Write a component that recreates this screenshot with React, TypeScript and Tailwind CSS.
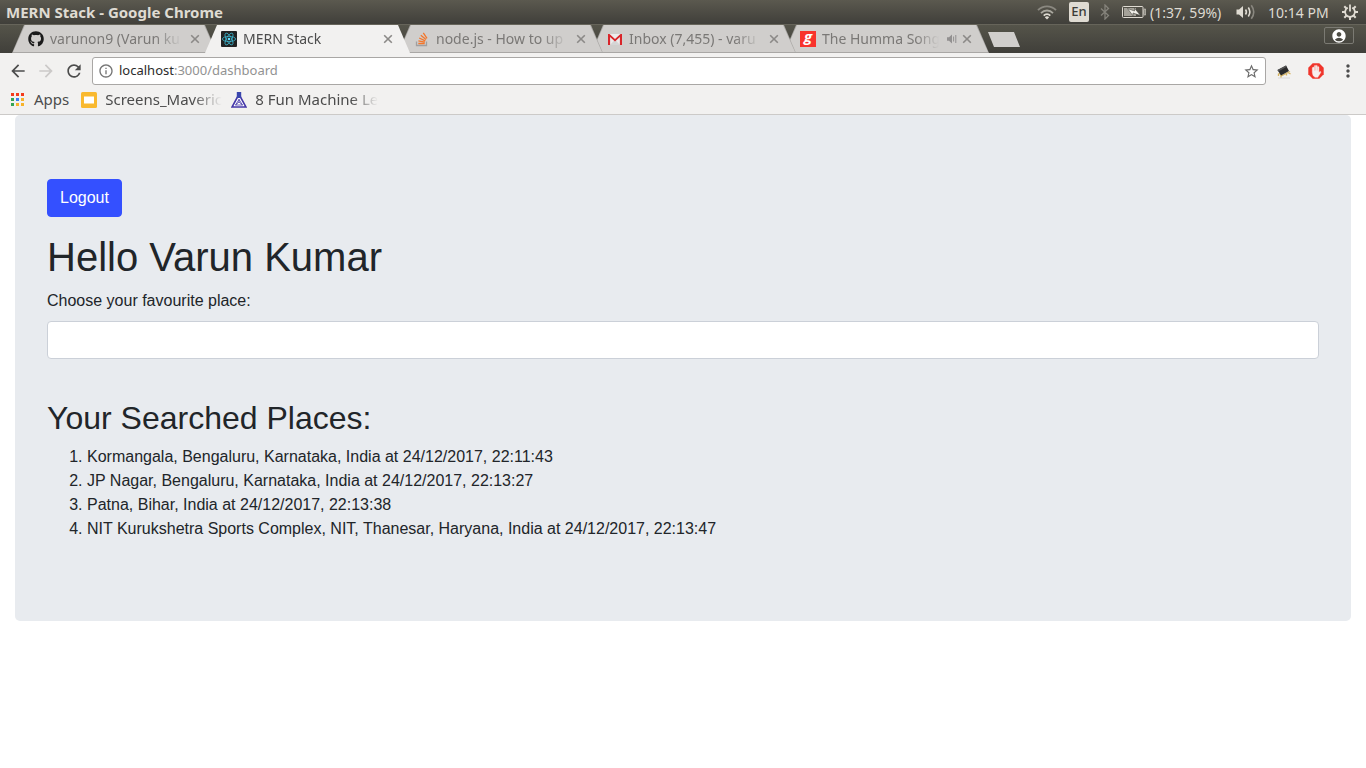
import type { ReactNode } from "react";
import {
  MdAccountCircle,
  MdArrowBack,
  MdArrowForward,
  MdInfoOutline,
  MdMoreVert,
  MdRefresh,
  MdStarBorder,
} from "react-icons/md";
import { FaGithub } from "react-icons/fa";

const places = [
  "Kormangala, Bengaluru, Karnataka, India at 24/12/2017, 22:11:43",
  "JP Nagar, Bengaluru, Karnataka, India at 24/12/2017, 22:13:27",
  "Patna, Bihar, India at 24/12/2017, 22:13:38",
  "NIT Kurukshetra Sports Complex, NIT, Thanesar, Haryana, India at 24/12/2017, 22:13:47",
];

function WifiIcon() {
  return (
    <svg width="20" height="16" viewBox="0 0 20 16" fill="none" strokeWidth="1.8">
      <path d="M1 6.2C6 1 14 1 19 6.2" stroke="#8a8880" />
      <path d="M4 9.2C7.400 5.600 12.600 5.600 16 9.200" stroke="#aaa89f" />
      <path d="M6.700 11.700C8.600 9.700 11.400 9.700 13.300 11.700" stroke="#dfdbd2" />
      <path d="M10 15.500L7.800 13.200Q10 11.500 12.200 13.200Z" fill="#dfdbd2" />
    </svg>
  );
}

function BluetoothIcon() {
  return (
    <svg width="10" height="16" viewBox="0 0 10 16" fill="none" stroke="#85837b" strokeWidth="1.300">
      <path d="M1 4.500L8.500 11.500L5 15V1L8.500 4.500L1 11.500" />
    </svg>
  );
}

function BatteryIcon() {
  return (
    <svg width="24" height="12" viewBox="0 0 24 12">
      <rect x="0.500" y="0.500" width="20.500" height="11" rx="1" fill="none" stroke="#dfdbd2" />
      <rect x="2" y="2" width="12" height="8" fill="#a5a299" />
      <rect x="22" y="3" width="1.800" height="6" rx="0.800" fill="none" stroke="#dfdbd2" strokeWidth="0.900" />
      <path d="M5.500 2.500L12.500 5V2.200L18.500 9.500L11 7V9.800Z" fill="#f2f0ea" stroke="#4a4943" strokeWidth="0.600" />
    </svg>
  );
}

function VolumeIcon() {
  return (
    <svg width="20" height="16" viewBox="0 0 20 16" fill="none" strokeWidth="1.600">
      <path d="M0.500 5.500H3L7 2V14L3 10.500H0.500Z" fill="#dfdbd2" />
      <path d="M9.500 5.500Q11.300 8 9.500 10.500" stroke="#dfdbd2" />
      <path d="M12.300 3.500Q15.400 8 12.300 12.500" stroke="#dfdbd2" />
      <path d="M15.300 1.200Q20.200 8 15.300 14.800" stroke="#8a8880" />
    </svg>
  );
}

function PowerGearIcon() {
  return (
    <svg width="16" height="16" viewBox="0 0 16 16" fill="none" stroke="#dfdbd2">
      <path d="M5.800 3.700A4.900 4.900 0 1 0 10.200 3.700" strokeWidth="1.800" />
      <path d="M8 0.500V7.500" strokeWidth="1.800" />
      <path
        d="M8 13V16M0 8H3M13 8H16M2.300 2.300L4.500 4.500M13.700 2.300L11.500 4.500M2.300 13.700L4.500 11.500M13.700 13.700L11.500 11.500"
        strokeWidth="2"
      />
    </svg>
  );
}

function ReactIcon() {
  return (
    <svg width="16" height="16" viewBox="0 0 16 16" fill="none" stroke="#3cb4cc" strokeWidth="0.800">
      <rect width="16" height="16" rx="1" fill="#222" stroke="none" />
      <ellipse cx="8" cy="8" rx="6.600" ry="2.600" />
      <ellipse cx="8" cy="8" rx="6.600" ry="2.600" transform="rotate(60 8 8)" />
      <ellipse cx="8" cy="8" rx="6.600" ry="2.600" transform="rotate(120 8 8)" />
      <circle cx="8" cy="8" r="1.300" fill="#61dafb" stroke="none" />
    </svg>
  );
}

function StackOverflowIcon() {
  return (
    <svg width="16" height="16" viewBox="0 0 16 16" fill="none" stroke="#f4762a" strokeWidth="1.300">
      <path d="M2.500 10.500V14.500H12.500V10.500" stroke="#a09fa0" />
      <path d="M4.300 12.500H10.700M4.400 9.900L10.800 11.200M5.200 7L11.300 9.900M6.800 4.200L12 8.500M9.300 1.800L13 7.300" />
    </svg>
  );
}

function GmailIcon() {
  return (
    <svg width="16" height="16" viewBox="0 0 16 16">
      <rect x="1" y="3" width="14" height="11" fill="#ececec" />
      <path d="M3 14L8 8.500L13 14Z" fill="#d5d5d5" />
      <path d="M1 14V3H2.500L8 8L13.500 3H15V14H12.900V6L8 10.500L3.100 6V14Z" fill="#d9252a" />
    </svg>
  );
}

function GaanaIcon() {
  return (
    <span className="flex size-4 items-start justify-center bg-[#f8332c] font-['Open_Sans',sans-serif] text-[15px] leading-[11px] font-bold text-white italic">
      g
    </span>
  );
}

function SpeakerIcon() {
  return (
    <svg width="10" height="10" viewBox="0 0 10 10" fill="none" stroke="#929090">
      <path d="M0 3.300H2L5 0.500V9.500L2 6.700H0Z" fill="#929090" stroke="none" />
      <path d="M6.600 2.500V7.500M8.800 1V9" />
    </svg>
  );
}

function CloseIcon() {
  return (
    <svg width="10" height="10" viewBox="0 0 10 10" stroke="#8b8987" strokeWidth="1.600">
      <path d="M1.200 1.200L8.800 8.800M8.800 1.200L1.200 8.800" />
    </svg>
  );
}

function AppsIcon() {
  const colors = ["#f43b1c", "#f43b1c", "#f43b1c", "#35a454", "#3c7df0", "#f7b32b", "#35a454", "#f7b32b", "#f7b32b"];
  return (
    <svg width="13" height="13" viewBox="0 0 13 13">
      {colors.map((color, i) => (
        <rect key={i} x={(i % 3) * 5} y={Math.floor(i / 3) * 5} width="3" height="3" fill={color} />
      ))}
    </svg>
  );
}

function SlidesIcon() {
  return (
    <svg width="16" height="16" viewBox="0 0 16 16">
      <rect width="16" height="16" rx="1.500" fill="#f9b92f" />
      <rect x="3" y="4.500" width="10" height="7" fill="#fff" />
    </svg>
  );
}

function FlaskIcon() {
  return (
    <svg width="16" height="16" viewBox="0 0 16 16" fill="none" stroke="#4436a8">
      <path d="M6.500 5L1 15H15L9.500 5Z" fill="#fff" strokeWidth="1.600" />
      <rect x="5.800" y="0" width="4.400" height="6" fill="#3a46ad" stroke="none" />
      <path d="M8 7V10L4.500 13M8 10L11.500 13M4.500 13H11.500L8 7.500Z" strokeWidth="0.800" />
    </svg>
  );
}

function ChipIcon() {
  return (
    <svg width="16" height="16" viewBox="0 0 16 16">
      <path d="M2 15H14" stroke="#dcdad8" />
      <path
        d="M2.500 10.500V13M5 12V14.500M12 9.500L14.500 11M10.500 11V12.500M3 10L6 12.500L14 8.500"
        stroke="#d5b25e"
        strokeWidth="1.300"
        fill="none"
      />
      <path d="M1.500 7L10 2.500L13 8L5 12.500Z" fill="#2b2b2b" />
      <path d="M1.500 7L10 2.500L10.800 3.800L2.300 8.400Z" fill="#555" />
    </svg>
  );
}

function BlockerIcon() {
  return (
    <svg width="16" height="16" viewBox="0 0 16 16">
      <path d="M4.700 0.300H11.300L15.700 4.700V11.300L11.300 15.700H4.700L0.300 11.300V4.700Z" fill="#f0352b" />
      <path
        d="M4.300 5V9.500L5 12.500L7 14.300H9.800L12.800 9.500Q12.900 8.200 11.900 8.500L10.900 9.600V4Q10.300 3 9.700 4V7.300H9.300V2.800Q8.700 1.800 8.100 2.800V7.300H7.700V2.700Q7.100 1.800 6.500 2.700V7.500H6.100V4.500Q5.200 3.200 4.300 5Z"
        fill="#f7efee"
        stroke="#f7efee"
        strokeWidth="0.400"
      />
    </svg>
  );
}

type TabProps = {
  title: string;
  icon: ReactNode;
  active?: boolean;
  audible?: boolean;
  layer: string;
};

function Tab({ title, icon, active, audible, layer }: TabProps) {
  return (
    <div
      className={`relative -mr-3 h-7 w-[205px] min-w-0 px-px pb-px [clip-path:polygon(12px_0,calc(100%-12px)_0,100%_100%,0_100%)] ${layer} ${
        active ? "bg-[#f2f1f0]" : "bg-[#a9a7a5]"
      }`}
    >
      <div
        className={`flex h-full items-center pr-4 pl-[15px] [clip-path:polygon(12px_0,calc(100%-12px)_0,100%_100%,0_100%)] ${
          active ? "bg-[#f2f1f0] text-[#4c4c4c]" : "bg-[#d0cecc] text-[#7a7876]"
        }`}
      >
        <span className="shrink-0">{icon}</span>
        <span className="ml-1.5 min-w-0 flex-1 overflow-hidden whitespace-nowrap [mask-image:linear-gradient(to_right,#000_80%,transparent)]">
          {title}
        </span>
        {audible && (
          <span className="ml-2">
            <SpeakerIcon />
          </span>
        )}
        <button type="button" aria-label={`Close ${title}`} className={audible ? "ml-[5px]" : "ml-2"}>
          <CloseIcon />
        </button>
      </div>
    </div>
  );
}

function SystemBar() {
  return (
    <div className="flex h-6 items-center bg-linear-to-b from-[#5b594f] to-[#403f3a] pr-2 pl-1.5 text-[14px] text-[#dfdbd2]">
      <span className="flex-1 text-[15px] font-bold">MERN Stack - Google Chrome</span>
      <div className="flex items-center">
        <WifiIcon />
        <span className="ml-3 flex size-5 items-center justify-center rounded-xs bg-[#dfdbd2] text-[13px] font-medium text-[#3c3b37]">
          En
        </span>
        <span className="ml-[11px]">
          <BluetoothIcon />
        </span>
        <span className="ml-3">
          <BatteryIcon />
        </span>
        <span className="ml-1 w-[74px] whitespace-nowrap">(1:37, 59%)</span>
        <span className="ml-3">
          <VolumeIcon />
        </span>
        <span className="ml-3 w-[62px] whitespace-nowrap">10:14 PM</span>
        <span className="ml-3">
          <PowerGearIcon />
        </span>
      </div>
    </div>
  );
}

function TabStrip() {
  return (
    <div className="flex h-[29px] items-end border-t border-[#66645a] bg-linear-to-b from-[#55544a] to-[#403f3a] pr-3 pl-3 text-[14px]">
      <Tab title="varunon9 (Varun ku" icon={<FaGithub size={16} color="#1b1b1b" />} layer="z-40" />
      <Tab title="MERN Stack" icon={<ReactIcon />} active layer="z-50" />
      <Tab title="node.js - How to up" icon={<StackOverflowIcon />} layer="z-30" />
      <Tab title="Inbox (7,455) - varu" icon={<GmailIcon />} layer="z-20" />
      <Tab title="The Humma Song" icon={<GaanaIcon />} audible layer="z-10" />
      <button
        type="button"
        aria-label="New tab"
        className="mb-1.5 ml-[11px] h-[15px] w-8 bg-[#d0cecc] [clip-path:polygon(0_0,26px_0,100%_100%,6px_100%)]"
      />
      <button
        type="button"
        aria-label="Profile"
        className="mb-[9px] ml-auto flex h-[17px] w-[30px] items-center justify-center rounded-xs border border-[#7b7a73] text-white"
      >
        <MdAccountCircle size={16} />
      </button>
    </div>
  );
}

function Toolbar() {
  return (
    <div className="border-b border-[#cccac8] bg-[#f2f1f0] text-[15px] text-[#4c4c4c]">
      <div className="flex items-center pt-1 pr-2 pl-2">
        <button type="button" aria-label="Back">
          <MdArrowBack size={20} />
        </button>
        <button type="button" aria-label="Forward" className="ml-2 text-[#cbc9c8]">
          <MdArrowForward size={20} />
        </button>
        <button type="button" aria-label="Reload" className="ml-2">
          <MdRefresh size={20} />
        </button>
        <div className="relative ml-2 flex h-7 min-w-0 flex-1 items-center rounded-[3px] border border-[#a9a7a5] bg-white px-[5px]">
          <MdInfoOutline size={16} color="#757575" />
          <div className="ml-[5px] flex-1 text-[13px] text-[#929292]">
            <span className="text-[#2b2b2b]">localhost</span>:3000/dashboard
          </div>
          <button type="button" aria-label="Bookmark this page" className="text-[#6b6b6b]">
            <MdStarBorder size={17} />
          </button>
        </div>
        <button type="button" aria-label="Chip extension" className="ml-2.5">
          <ChipIcon />
        </button>
        <button type="button" aria-label="Ad blocker" className="ml-4">
          <BlockerIcon />
        </button>
        <button type="button" aria-label="Menu" className="ml-3.5">
          <MdMoreVert size={20} />
        </button>
      </div>
      <div className="flex h-[29px] items-center pl-[11px]">
        <a href="#apps" className="flex items-center gap-2.5">
          <AppsIcon />
          Apps
        </a>
        <a href="#screens" className="ml-3 flex w-[142px] items-center gap-2">
          <span className="shrink-0">
            <SlidesIcon />
          </span>
          <span className="overflow-hidden whitespace-nowrap [mask-image:linear-gradient(to_right,#000_75%,transparent)]">
            Screens_Maveric
          </span>
        </a>
        <a href="#machine-learning" className="ml-2 flex w-[150px] items-center gap-2">
          <span className="shrink-0">
            <FlaskIcon />
          </span>
          <span className="overflow-hidden whitespace-nowrap [mask-image:linear-gradient(to_right,#000_78%,transparent)]">
            8 Fun Machine Le
          </span>
        </a>
      </div>
    </div>
  );
}

function Dashboard() {
  return (
    <main className="px-[15px] font-['Liberation_Sans',Arial,sans-serif] text-base text-[#212529]">
      <div className="rounded-[5px] bg-[#e8ebef] px-8 py-16">
        <button type="button" className="rounded-sm border border-[#3450ff] bg-[#3450ff] px-3 py-1.5 text-white">
          Logout
        </button>
        <h1 className="mt-4 mb-2 text-[40px] leading-[48px]">Hello Varun Kumar</h1>
        <label htmlFor="place" className="mb-2 block">
          Choose your favourite place:
        </label>
        <input
          id="place"
          type="text"
          className="block h-[38px] w-full rounded-sm border border-[#cbd0d8] bg-white px-3 py-1.5"
        />
        <h2 className="mt-10 mb-2 text-[32px] leading-[38px]">Your Searched Places:</h2>
        <ol className="mb-4 list-decimal pl-10">
          {places.map((place) => (
            <li key={place}>{place}</li>
          ))}
        </ol>
      </div>
    </main>
  );
}

export default function App() {
  return (
    <div className="min-h-screen bg-white">
      <header className="font-['Noto_Sans',sans-serif]">
        <SystemBar />
        <TabStrip />
        <Toolbar />
      </header>
      <Dashboard />
    </div>
  );
}
